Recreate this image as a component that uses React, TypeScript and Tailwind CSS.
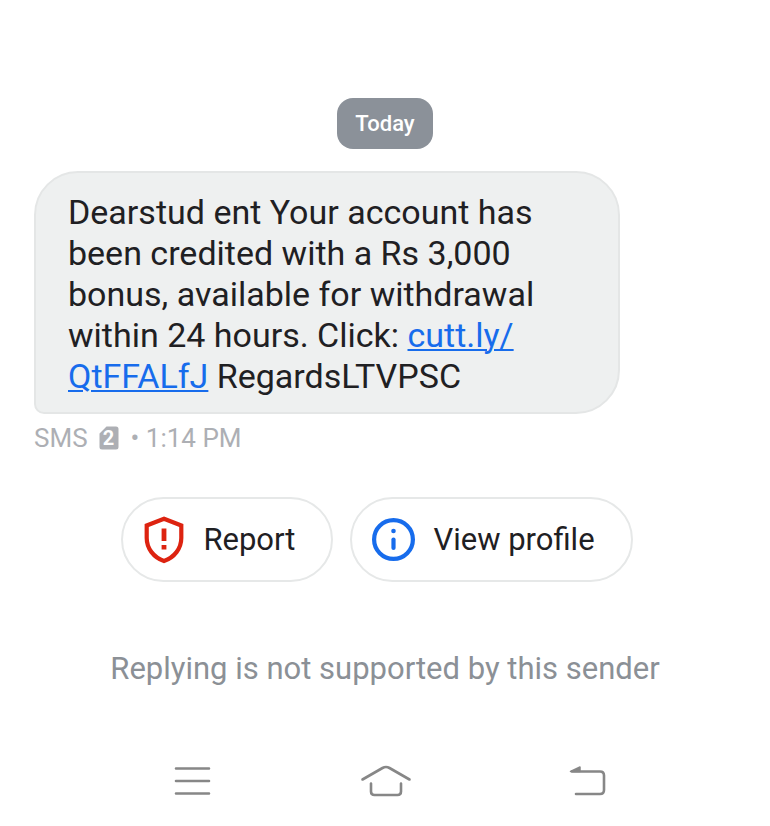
import type { ReactNode } from 'react';

function ShieldIcon() {
  return (
    <svg width="42" height="48" viewBox="0 0 42 48" fill="none" aria-hidden="true">
      <path
        d="M21 2.800 38.300 9.500V22c0 10.500-7 19.500-17.300 23C10.700 41.500 3.700 32.500 3.700 22V9.500Z"
        stroke="#dd2310"
        strokeWidth="4.200"
      />
      <path d="M18.600 12.500h4.800v12.500h-4.800zM18.600 29h4.800v4.600h-4.800z" fill="#dd2310" />
    </svg>
  );
}

function InfoIcon() {
  return (
    <svg width="43" height="43" viewBox="0 0 43 43" fill="none" aria-hidden="true">
      <circle cx="21.500" cy="21.500" r="19.400" stroke="#176cec" strokeWidth="4.200" />
      <circle cx="21.500" cy="13" r="2.300" fill="#176cec" />
      <path d="M21.500 21.500v8.500" stroke="#176cec" strokeWidth="4.200" strokeLinecap="round" />
    </svg>
  );
}

function SimIcon() {
  return (
    <span className="grid h-6 w-5 place-items-center">
      <svg className="col-start-1 row-start-1" width="20" height="24" viewBox="0 0 20 24" aria-hidden="true">
        <path d="M7.500 0.500H17a2.500 2.500 0 0 1 2.500 2.500v18a2.500 2.500 0 0 1-2.500 2.500H3A2.500 2.500 0 0 1 .5 21V7.500Z" fill="#adafb4" />
      </svg>
      <span className="col-start-1 row-start-1 text-xl leading-6 font-bold text-white">2</span>
    </span>
  );
}

function Action({ icon, children }: { icon: ReactNode; children: ReactNode }) {
  return (
    <button
      type="button"
      className="flex h-[85px] items-center gap-[18px] rounded-full border-2 border-[#e6e8e8] bg-white pr-9 pl-5 text-[31px] leading-9"
    >
      {icon}
      {children}
    </button>
  );
}

function NavButton({ label, children }: { label: string; children: ReactNode }) {
  return (
    <button type="button" aria-label={label} className="flex h-12 w-14 items-center justify-center">
      <svg
        width="56"
        height="40"
        viewBox="0 0 56 40"
        fill="none"
        stroke="#878787"
        strokeWidth="2.600"
        strokeLinecap="round"
        strokeLinejoin="round"
      >
        {children}
      </svg>
    </button>
  );
}

export default function App() {
  return (
    <div className="flex min-h-screen flex-col bg-white font-['Roboto','Noto_Sans',sans-serif] text-[#1f2023]">
      <main className="flex flex-col pt-[98px]">
        <div className="self-center rounded-2xl bg-[#8b9199] px-[18px] py-[10px] text-[22px] leading-[31px] font-medium text-white">
          Today
        </div>

        <section className="mt-[22px] px-[34px]">
          <p className="max-w-[586px] rounded-[44px] rounded-bl-[10px] border-2 border-[#e4e6e6] bg-[#eef0f0] px-8 pt-[19px] pb-[15px] text-[34px] leading-[41px]">
            Dearstud ent Your account has been credited with a Rs 3,000 bonus, available for withdrawal within 24
            hours. Click:{' '}
            <a href="#link" className="text-[#176cec] underline decoration-2 underline-offset-2">
              cutt.ly/
              <wbr />
              QtFFALfJ
            </a>{' '}
            RegardsLTVPSC
          </p>
          <div className="mt-2 flex items-center text-[26px] leading-8 text-[#adafb4]">
            <span className="mr-[11px]">SMS</span>
            <SimIcon />
            <span className="ml-3">• 1:14 PM</span>
          </div>
        </section>

        <div className="mt-[43px] flex justify-center gap-[17px] pr-4">
          <Action icon={<ShieldIcon />}>Report</Action>
          <Action icon={<InfoIcon />}>View profile</Action>
        </div>

        <p className="mt-[69px] text-center text-[31px] leading-9 text-[#8b9096]">
          Replying is not supported by this sender
        </p>
      </main>

      <nav className="mt-[70px] flex justify-around px-24">
        <NavButton label="Recent apps">
          <path d="M12 7.500h33M12 20h33M12 32.500h33" />
        </NavButton>
        <NavButton label="Home">
          <path d="M5.500 18.500 25.500 7q3.500-2 7 0L52.500 18.500M14 22.500v8q0 3.500 3.500 3.500h23q3.500 0 3.500-3.500v-8" />
        </NavButton>
        <NavButton label="Back">
          <path d="M22 10.500h28q4 0 4 4V29q0 4-4 4H26" />
          <path d="M20.500 10.500 30 6v4.500Z" fill="#878787" strokeWidth="1.500" />
        </NavButton>
      </nav>
    </div>
  );
}
